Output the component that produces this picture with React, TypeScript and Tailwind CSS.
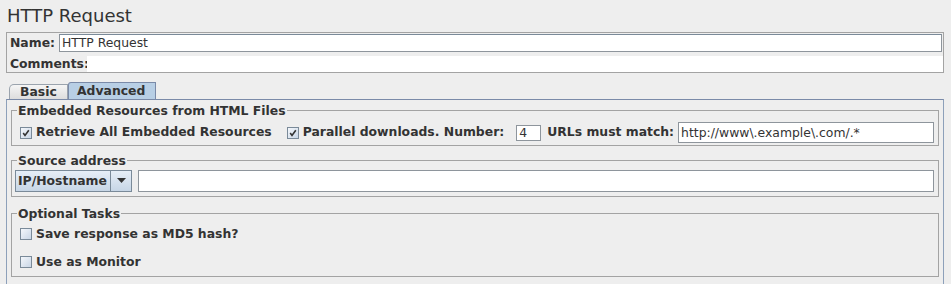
import React from "react";

function Check({ checked }: { checked: boolean }) {
  return (
    <span className="w-[12px] h-[12px] border border-[#7a8a99] bg-gradient-to-br from-[#f4f7fb] to-[#c9d6e6] flex items-center justify-center shrink-0">
      {checked && (
        <svg width="8" height="8" viewBox="0 0 8 8">
          <path d="M1.2 4 L3 6.4 L6.8 1.2" stroke="#333" strokeWidth="1.6" fill="none" />
        </svg>
      )}
    </span>
  );
}

function Group({ title, className, children }: { title: string; className?: string; children: React.ReactNode }) {
  return (
    <fieldset className={"border border-[#a3a3a3] mx-[4px] " + (className ?? "")}>
      <legend className="ml-[5px] px-[1px] font-bold text-[12.4px] leading-[15px] text-[#333333] whitespace-nowrap">{title}</legend>
      {children}
    </fieldset>
  );
}

export default function App() {
  return (
    <div className="w-[951px] h-[284px] overflow-hidden bg-[#eeeeee] text-[#333333] font-['DejaVu_Sans',sans-serif] whitespace-nowrap">
      <div className="pl-[7px] pt-[5px] h-[32px] text-[18px] leading-[22px]">HTTP Request</div>

      <div className="ml-[6px] w-[938px] h-[41px] border border-[#a3a3a3] flex flex-col">
        <div className="flex items-center h-[20px] pl-[3px] pr-[1px]">
          <span className="font-bold text-[12.4px] w-[49px] shrink-0">Name:</span>
          <div className="flex-1 h-[18px] bg-white border border-[#8e959c] border-t-[#7a8a99] text-[12.4px] leading-[16px] pl-[2px]">HTTP Request</div>
        </div>
        <div className="flex items-center mt-[3px] h-[16px] pl-[3px]">
          <span className="font-bold text-[12.4px] w-[77px] shrink-0">Comments:</span>
          <div className="flex-1 h-[16px] bg-white"></div>
        </div>
      </div>

      <div className="flex items-end h-[26px] pl-[9px]">
        <div className="w-[59px] h-[15px] border border-b-0 border-[#9aa3ad] rounded-tl-[5px] bg-gradient-to-b from-[#f5f5f5] to-[#dddddd] font-bold text-[12.4px] leading-[14px] pl-[10px]">Basic</div>
        <div className="w-[88px] h-[17px] border border-b-0 border-[#7a8aa8] rounded-tl-[3px] bg-[#b8cfe5] font-bold text-[12.4px] leading-[16px] pl-[8px]">Advanced</div>
      </div>

      <div className="ml-[6px] w-[938px] h-[200px] border border-[#8da0ba] border-t-[#7a8aa8] pt-[3px]">
        <Group title="Embedded Resources from HTML Files" className="h-[43px]">
          <div className="flex items-center h-[23px] mt-[3px] pl-[8px] text-[12.4px] font-bold">
            <Check checked />
            <span className="ml-[4px]">Retrieve All Embedded Resources</span>
            <span className="ml-[15px]"><Check checked /></span>
            <span className="ml-[4px]">Parallel downloads. Number:</span>
            <div className="ml-[12px] w-[25px] h-[16px] shrink-0 bg-white border border-[#8e959c] font-normal leading-[14px] pl-[2px]">4</div>
            <span className="ml-[6px]">URLs must match:</span>
            <div className="ml-[4px] w-[256px] h-[21px] shrink-0 bg-white border border-[#8e959c] font-normal leading-[19px] pl-[2px]">http://www\.example\.com/.*</div>
          </div>
        </Group>

        <Group title="Source address" className="mt-[7px] h-[44px]">
          <div className="flex items-center h-[25px] pl-[3px] text-[12.4px]">
            <div className="flex h-[22px] border border-[#7a8a99]">
              <div className="w-[94px] bg-gradient-to-b from-[#e6eef7] to-[#c7d6e6] font-bold leading-[20px] pl-[2px]">IP/Hostname</div>
              <div className="w-[21px] border-l border-[#7a8a99] bg-gradient-to-b from-[#e6eef7] to-[#c7d6e6] flex items-center justify-center">
                <svg width="9" height="5" viewBox="0 0 9 5"><path d="M0 0 H9 L4.5 5 Z" fill="#333" /></svg>
              </div>
            </div>
            <div className="ml-[6px] w-[796px] h-[22px] bg-white border border-[#8e959c]"></div>
          </div>
        </Group>

        <Group title="Optional Tasks" className="mt-[9px] h-[71px]">
          <div className="flex flex-col pl-[8px] text-[12.4px] font-bold">
            <div className="flex items-center h-[20px] mt-[3px]">
              <Check checked={false} />
              <span className="ml-[4px]">Save response as MD5 hash?</span>
            </div>
            <div className="flex items-center h-[20px] mt-[8px]">
              <Check checked={false} />
              <span className="ml-[4px]">Use as Monitor</span>
            </div>
          </div>
        </Group>
      </div>
    </div>
  );
}
